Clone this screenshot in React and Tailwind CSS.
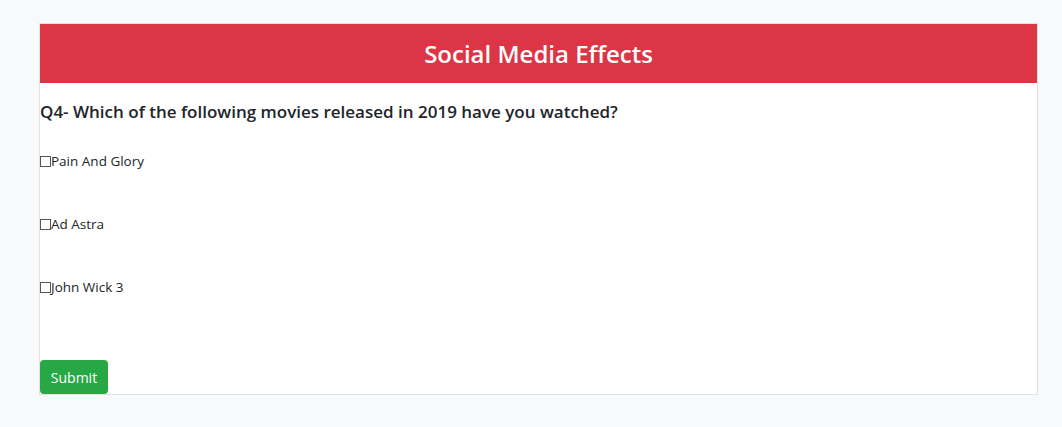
const MOVIES = ["Pain And Glory", "Ad Astra", "John Wick 3"]

export default function App() {
  return (
    <div className="min-h-[427px] bg-[#f8f9fa] pt-[23px] pl-[39px] font-['Open_Sans',sans-serif] text-[#212529]">
      <div className="flex h-[372px] w-[999px] flex-col border border-[#dee2e6] bg-white">
        <div className="flex h-[59px] items-center justify-center bg-[#dc3545]">
          <h1 className="text-[24px] font-semibold text-white">Social Media Effects</h1>
        </div>
        <h2 className="mt-[16px] text-[17px] font-semibold leading-[26px]">
          Q4- Which of the following movies released in 2019 have you watched?
        </h2>
        <div className="mt-[26px] flex flex-col gap-[42px]">
          {MOVIES.map((m) => (
            <label key={m} className="flex h-[21px] items-center text-[13.5px]">
              <span className="h-[11px] w-[11px] border border-[#555]" />
              <span>{m}</span>
            </label>
          ))}
        </div>
        <div className="mt-auto">
          <button className="h-[34px] w-[68px] rounded-[4px] bg-[#28a745] text-[14px] text-white">
            Submit
          </button>
        </div>
      </div>
    </div>
  )
}
